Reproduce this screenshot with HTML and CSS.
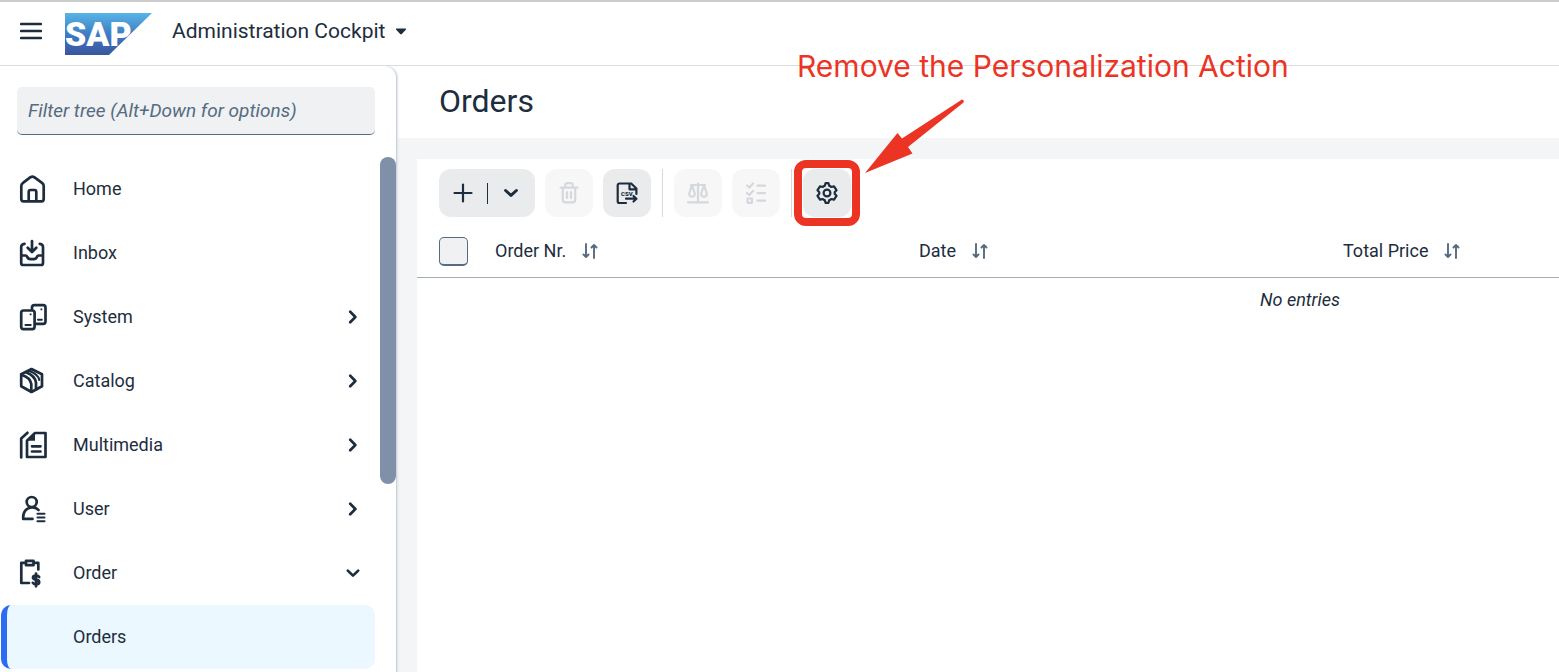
FILE: index.html
```html
<!DOCTYPE html>
<html lang="en">
<head>
<meta charset="utf-8">
<title>Administration Cockpit</title>
<link rel="stylesheet" href="styles.css">
</head>
<body>
<header class="topbar">
  <button class="menu" aria-label="Menu"><svg width="22" height="18" viewBox="0 0 22 18"><path d="M1.200 2H20.800M1.200 9H20.800M1.200 16H20.800"/></svg></button>
  <svg class="logo" width="87" height="42" viewBox="0 0 87 42" role="img" aria-label="SAP">
    <defs><linearGradient id="g" x1="0" y1="0" x2="0" y2="1"><stop offset="0" stop-color="#58b4e6"/><stop offset=".5" stop-color="#3f7cc3"/><stop offset="1" stop-color="#3a559f"/></linearGradient></defs>
    <path d="M0 0H87L44 42H0Z" fill="url(#g)"/>
    <text x="0" y="33">SAP</text>
  </svg>
  <button class="app-title">Administration Cockpit <svg width="12" height="7" viewBox="0 0 12 7"><path class="solid" d="M1.500.5H10.500Q11.800.7 10.800 1.800L6.800 6Q6 6.800 5.200 6L1.200 1.800Q.2.7 1.500.5Z"/></svg></button>
</header>
<div class="body">
  <nav class="sidebar">
    <input class="filter" type="text" aria-label="Filter tree" placeholder="Filter tree (Alt+Down for options)">
    <div class="tree">
      <a class="item" href="#"><svg class="icon" viewBox="0 0 30 30"><path d="M3.3 12Q3.3 10 5 8.8L12.5 3.2Q14.4 2.2 16.2 3.2L24 8.8Q25.7 10 25.7 12V25Q25.7 27.3 23.5 27.3H5.5Q3.3 27.3 3.3 25ZM10.7 27V18Q10.7 16 12.5 16H16.5Q18.3 16 18.3 18V27"/></svg><span>Home</span></a>
      <a class="item" href="#"><svg class="icon" viewBox="0 0 30 30"><path d="M6.5 5.8Q3.2 6.2 3.2 9V25Q3.2 27 5.2 27H23Q25 27 25 25V9Q25 6.2 21.8 5.8M14 3V13M9.7 9.7L14 14 18.3 9.7M3.2 17.5H7.5Q8.8 17.5 9.2 18.8 10 21.2 12.5 21.2H15.7Q18 21.2 19 18.8 19.5 17.5 20.7 17.5H25"/></svg><span>Inbox</span></a>
      <a class="item" href="#"><svg class="icon" viewBox="0 0 30 30"><path d="M14 7V5.5Q14 3.2 16.3 3.2H25.2Q27.5 3.2 27.5 5.5V19.5Q27.5 21.8 25.2 21.8H18"/><rect x="3.2" y="8.5" width="13.4" height="18.6" rx="2.3"/><path class="thin" d="M7.5 23H12.7M20 17.8H23.8"/><path class="solid" d="M11.7 11.4h1.8v1.8h-1.8zM22.5 6.4h1.8v1.8h-1.8z"/></svg><span>System</span><svg class="chev" viewBox="0 0 16 16"><path d="M5.2 2.8L10.4 8 5.2 13.2"/></svg></a>
      <a class="item" href="#"><svg class="icon" viewBox="0 0 30 30"><path d="M13.5 3L24 8.3V20.3L13.5 26 3.2 20.3V8.3Z"/><path d="M3.2 8.8Q12.3 11.500 13.3 18V25.5M8 6.300Q17 9.800 18 16.5V23.5"/><path class="thin" d="M11.500 5Q20.5 8.500 21.3 14"/></svg><span>Catalog</span><svg class="chev" viewBox="0 0 16 16"><path d="M5.2 2.8L10.4 8 5.2 13.2"/></svg></a>
      <a class="item" href="#"><svg class="icon" viewBox="0 0 30 30"><path d="M17 3H27.5V27H9V10.8ZM3.2 27.5V8.5L9.5 2.8M14 16.3H22.5M14 21.5H22.5"/><path class="solid" d="M17 3V10.8H9Z"/></svg><span>Multimedia</span><svg class="chev" viewBox="0 0 16 16"><path d="M5.2 2.8L10.4 8 5.2 13.2"/></svg></a>
      <a class="item" href="#"><svg class="icon" viewBox="0 0 30 30"><circle cx="13.7" cy="8" r="5"/><path d="M14.5 24.9H5.2V23.5Q5.2 17.500 9.3 14.800 13.700 12.200 18 14.200L20.5 16"/><path class="thin" d="M19.5 19.7H26.5M19.5 23.5H26.5M19.5 27.3H26.5"/></svg><span>User</span><svg class="chev" viewBox="0 0 16 16"><path d="M5.2 2.8L10.4 8 5.2 13.2"/></svg></a>
      <a class="item" href="#"><svg class="icon" viewBox="0 0 30 30"><path d="M7.5 4.8H3.3V25H11M16.5 4.8H20.3V11.5M8 2.8H15.5V7.2H8Z"/><path d="M21.2 19Q20.5 17.5 18 17.5 15 17.5 15 19.5 15 21.2 18 21.7 21.2 22.2 21.2 24.2 21.2 26.3 18 26.3 15.5 26.3 14.8 24.8M18 15.500V28.300"/></svg><span>Order</span><svg class="chev" viewBox="0 0 16 16"><path d="M2.8 5.6L8 10.6 13.2 5.6"/></svg></a>
      <a class="item selected" href="#"><span class="icon"></span><span>Orders</span></a>
    </div>
    <div class="thumb"></div>
  </nav>
  <main class="main">
    <h1 class="title">Orders</h1>
    <section class="panel">
      <div class="toolbar">
        <div class="split">
          <button aria-label="Create"><svg width="20" height="20" viewBox="0 0 20 20"><path d="M10 1.5V18.5M1.5 10H18.5"/></svg></button>
          <button aria-label="More types"><svg width="16" height="16" viewBox="0 0 16 16"><path class="bold" d="M2.6 5.5L8 10.4 13.4 5.5"/></svg></button>
        </div>
        <button class="tool" disabled aria-label="Delete"><svg viewBox="0 0 24 24"><path d="M3.6 6.6H20.4M5.8 7V18.5Q5.8 21.3 8.5 21.3H15.5Q18.2 21.3 18.2 18.5V7M8.2 6V4.5Q8.2 2.2 10.5 2.2H13.5Q15.8 2.2 15.8 4.5V6M10 11V17M14 11V17"/></svg></button>
        <button class="tool" aria-label="Export CSV"><svg viewBox="0 0 24 24"><path d="M11 22H4.5Q2.7 22 2.7 20.2V4.5Q2.7 2.5 4.7 2.5H16.2L21.4 7.5V13M14.500 3V8.3H21M11 17.7H21M18.5 15L21.5 17.7 18.5 20.5"/><text x="6" y="15">CSV</text></svg></button>
        <span class="sep"></span>
        <button class="tool" disabled aria-label="Compare"><svg viewBox="0 0 24 24"><path d="M2 21.3H22M12 2.5V21M5 4H19M6 4L3.2 12.5Q3 15.7 6 15.7T8.8 12.5L6 4M18 4L15.2 12.5Q15 15.7 18 15.7T20.8 12.5L18 4"/></svg></button>
        <button class="tool" disabled aria-label="Bulk edit"><svg viewBox="0 0 24 24"><path d="M3 4.5L5.3 6.5 9 2.5M3 12L5.3 14 9 10M3.5 17.5H8V21.8H3.5ZM13.5 4.7H21M13.5 12.2H21M13.5 19.7H21"/></svg></button>
        <span class="sep"></span>
        <div class="marked">
          <button class="tool" aria-label="Personalization"><svg viewBox="0 0 24 24"><path d="M10.6 2.2H13.4L14.3 4.9Q15.5 5.2 16.2 6L19 5.4 21.5 9.2 19.7 11.2Q19.8 12 19.7 12.8L21.5 14.8 19 18.6 16.2 18Q15.5 18.8 14.3 19.1L13.4 21.8H10.6L9.7 19.1Q8.5 18.8 7.8 18L5 18.6 2.5 14.8 4.3 12.8Q4.2 12 4.3 11.2L2.5 9.2 5 5.4 7.8 6Q8.5 5.2 9.7 4.9Z"/><circle cx="12" cy="12" r="3.4"/></svg></button>
          <span class="frame"></span>
          <svg class="arrow" width="100" height="75" viewBox="0 0 100 75"><path d="M0 74L32.500 34 37 39.500 97 0.500Q99.500 1 98.500 3.500L43 48 47.500 54.500Z"/></svg>
          <p class="note">Remove the Personalization Action</p>
        </div>
      </div>
      <div class="grid-wrap">
        <table class="grid">
          <thead><tr>
            <th class="check"><input type="checkbox" aria-label="Select all"></th>
            <th>Order Nr.<svg class="sort" viewBox="0 0 18 16"><path d="M5 1V14M2.500 11.500L5 14 7.500 11.500M13 15V2M10.500 4.500L13 2 15.500 4.500"/></svg></th>
            <th>Date<svg class="sort" viewBox="0 0 18 16"><path d="M5 1V14M2.500 11.500L5 14 7.500 11.500M13 15V2M10.500 4.500L13 2 15.500 4.500"/></svg></th>
            <th>Total Price<svg class="sort" viewBox="0 0 18 16"><path d="M5 1V14M2.500 11.500L5 14 7.500 11.500M13 15V2M10.500 4.500L13 2 15.500 4.500"/></svg></th>
            <th></th>
          </tr></thead>
          <tbody><tr><td colspan="5">No entries</td></tr></tbody>
        </table>
      </div>
    </section>
  </main>
</div>
</body>
</html>
```
FILE: styles.css
```css
* { box-sizing: border-box; }
body {
  margin: 0;
  height: 100vh;
  overflow: hidden;
  display: flex;
  flex-direction: column;
  font: 18px/24px Roboto, "Liberation Sans", sans-serif;
  color: #1d2d3e;
  background: #fff;
}
button { font: inherit; color: inherit; border: 0; padding: 0; background: none; }
svg { display: block; flex: none; fill: none; stroke: #1d2d3e; stroke-width: 2.7; stroke-linecap: round; stroke-linejoin: round; }
svg .thin { stroke-width: 2.1; }
svg .bold { stroke-width: 3; }
svg .solid { fill: #1d2d3e; stroke: none; }

.topbar {
  flex: none;
  display: flex;
  align-items: center;
  height: 66px;
  padding: 0 0 5px 20px;
  border-top: 2px solid #ccc;
  border-bottom: 1px solid #d9dde3;
}
.logo { margin: 5px 20px 0 23px; stroke: none; }
.logo text { font: 900 34px Roboto, sans-serif; fill: #fff; }
.app-title { display: flex; align-items: center; gap: 10px; font-size: 21px; }

.body { flex: 1; min-height: 0; display: flex; }
.sidebar {
  position: relative;
  flex: none;
  display: flex;
  flex-direction: column;
  width: 397px;
  padding-top: 21px;
  border-right: 1px solid #cdd3db;
  border-top-right-radius: 12px;
  box-shadow: 1px 0 2px #dde1e6;
  background: #fff;
  z-index: 1;
}
.filter {
  flex: none;
  height: 48px;
  margin: 0 21px 22px 17px;
  padding: 0 11px;
  border: 0;
  border-bottom: 1px solid #556b82;
  border-radius: 5px;
  background: #eff1f2;
  font: inherit;
  font-size: 19px;
  color: #1d2d3e;
}
.filter::placeholder { color: #556b82; font-style: italic; opacity: 1; }
.tree { flex: 1; min-height: 0; overflow: hidden; padding: 0 21px 0 1px; }
.item {
  display: flex;
  align-items: center;
  gap: 25px;
  height: 64px;
  padding: 0 14px 0 17px;
  color: inherit;
  text-decoration: none;
}
.icon { width: 30px; height: 30px; flex: none; }
.chev { width: 16px; height: 16px; margin-left: auto; }
.selected {
  padding-left: 11px;
  border-left: 6px solid #2b6df2;
  border-radius: 10px;
  background: #ebf8ff;
}
.thumb {
  position: absolute;
  top: 91px;
  right: 0;
  width: 16px;
  height: 327px;
  border-radius: 8px;
  background: #7f90a8;
}

.main { flex: 1; min-width: 0; display: flex; flex-direction: column; background: #f4f5f7; }
.title {
  margin: 0 0 21px -12px;
  padding: 15px 54px 17px;
  font-size: 32px;
  line-height: 40px;
  font-weight: 400;
  background: #fff;
}
.panel { flex: 1; min-height: 0; margin-left: 20px; background: #fff; }
.toolbar { display: flex; gap: 10px; padding: 10px 22px 8px; }
.tool, .split { height: 48px; border-radius: 12px; background: #eaebed; }
.tool { display: flex; align-items: center; justify-content: center; width: 48px; }
.tool svg { width: 24px; height: 24px; stroke-width: 2.2; }
.tool text { font: 900 6px Roboto, sans-serif; fill: #1d2d3e; stroke: none; }
.tool:disabled { background: #f7f7f7; }
.tool:disabled svg { stroke: #d5d8dc; }
.split { display: flex; align-items: center; width: 96px; }
.split button { flex: 1; display: flex; justify-content: center; }
.split button + button { height: 21px; align-items: center; border-left: 1px solid #1d2d3e; }
.split svg { stroke-width: 2.2; }
.sep { width: 1px; margin: 0 1px; background: #d9d9d9; }
.marked { position: relative; }
.frame {
  position: absolute;
  inset: -9px;
  border: 8px solid #eb3424;
  border-radius: 12px;
}
.arrow { position: absolute; left: 62px; top: -70px; fill: #eb3424; stroke: none; }
.note {
  position: absolute;
  left: -6px;
  top: -123px;
  margin: 0;
  font-family: Inter, sans-serif;
  font-size: 30px;
  line-height: 40px;
  white-space: nowrap;
  color: #eb3424;
  z-index: 2;
}

.grid-wrap { overflow: hidden; }
.grid { width: 1766px; table-layout: fixed; border-collapse: collapse; }
.grid th {
  height: 52px;
  width: 424px;
  padding: 1px 8px 0;
  border-bottom: 1px solid #a3adb8;
  font-weight: 400;
  text-align: left;
}
.grid .check { width: 70px; padding: 1px 0 0 22px; }
.check input {
  display: block;
  appearance: none;
  width: 29px;
  height: 29px;
  margin: 0;
  border: 1px solid #556b82;
  border-bottom-width: 2px;
  border-radius: 5px;
  background: #eff1f2;
}
.sort { display: inline-block; width: 18px; height: 16px; margin-left: 15px; vertical-align: -2px; stroke: #556b82; stroke-width: 1.9; }
.grid td { height: 46px; padding: 0; text-align: center; font-style: italic; }
```
